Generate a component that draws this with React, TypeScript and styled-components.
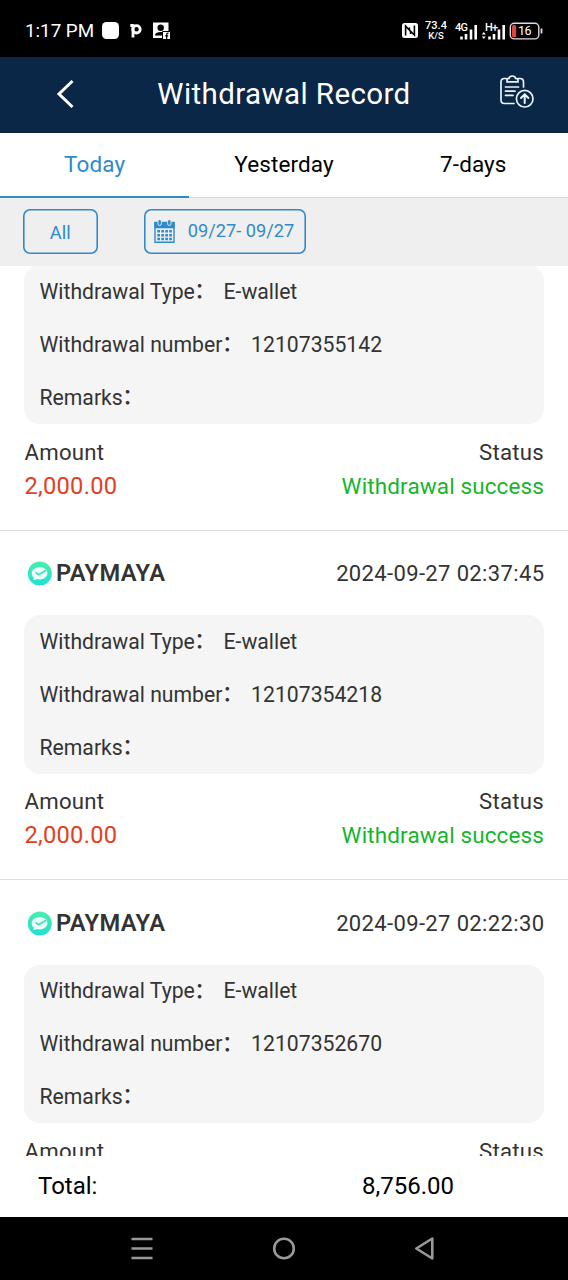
import React from "react";
import styled, { createGlobalStyle } from "styled-components";

const GlobalStyle = createGlobalStyle`
  * { box-sizing: border-box; }
  body {
    margin: 0;
    background: #fff;
    font-family: Roboto, "Noto Sans CJK SC", sans-serif;
    color: #333;
  }
`;

const Screen = styled.div`
  width: 568px;
  height: 1280px;
  display: flex;
  flex-direction: column;
  overflow: hidden;
  background: #fff;
  white-space: nowrap;
`;

const StatusBar = styled.div`
  height: 57px;
  flex: none;
  background: #000;
  color: #fff;
  display: flex;
  align-items: center;
  padding: 4px 25px 0 25px;
`;

const Clock = styled.span`
  width: 77px;
  font-size: 18.8px;
  line-height: 22px;
`;

const StatusIcons = styled.svg`
  display: block;
  flex: none;
`;

const Spacer = styled.div`
  flex: 1;
`;

const NetSpeed = styled.div`
  width: 24px;
  margin: 0 7px 0 6px;
  display: flex;
  flex-direction: column;
  align-items: center;
  font-size: 11px;
  line-height: 10px;
  font-weight: 500;
`;

const SpeedUnit = styled.span`
  font-size: 9.5px;
`;

const Header = styled.header`
  height: 75.5px;
  flex: none;
  background: #0b2747;
  color: #fff;
  display: grid;
  grid-template-columns: 100px 1fr 100px;
  align-items: center;
  justify-items: center;
`;

const BackIcon = styled.svg`
  display: block;
  margin: 0 0 2px 32px;
`;

const RecordIcon = styled.svg`
  display: block;
  margin: 0 2px 6px 0;
`;

const Title = styled.h1`
  margin: 0 0 1.5px;
  font-size: 29.5px;
  font-weight: 400;
  letter-spacing: 0.4px;
  line-height: 36px;
`;

const Tabs = styled.nav`
  height: 65.5px;
  flex: none;
  display: grid;
  grid-template-columns: repeat(3, 1fr);
`;

const Tab = styled.div<{ $active?: boolean }>`
  display: flex;
  align-items: center;
  justify-content: center;
  padding-bottom: ${(p) => (p.$active ? 0 : 1.5)}px;
  font-size: 22.5px;
  letter-spacing: 0.1px;
  color: ${(p) => (p.$active ? "#2e8bcb" : "#000")};
  border-bottom: ${(p) => (p.$active ? "2.5px solid #2e8bcb" : "1px solid #d8d8d8")};
`;

const Filters = styled.div`
  height: 68px;
  flex: none;
  background: #efefef;
  display: flex;
  align-items: flex-start;
  gap: 46px;
  padding: 11px 22.5px 0;
`;

const FilterButton = styled.div<{ $width: number; $top?: number }>`
  width: ${(p) => p.$width}px;
  height: 45px;
  padding-top: ${(p) => p.$top ?? 0}px;
  box-shadow: inset 0 0 0 1.6px #2e8bcb;
  border-radius: 7px;
  display: flex;
  align-items: center;
  justify-content: center;
  gap: 13px;
  font-size: 18.3px;
  color: #2e8bcb;
`;

const DateRange = styled.span`
  margin-right: 2px;
  padding-bottom: 2px;
  font-size: 18.2px;
`;

const List = styled.main`
  height: 890px;
  flex: none;
  overflow: hidden;
`;

const Record = styled.section<{ $scrolled?: boolean }>`
  height: 349.7px;
  margin-top: ${(p) => (p.$scrolled ? -85.2 : 0)}px;
  padding: 0 24px;
  border-bottom: 1.5px solid #dedede;
`;

const RecordHead = styled.div`
  height: 84.5px;
  padding-top: 1.4px;
  display: flex;
  align-items: center;
  justify-content: space-between;
`;

const Wallet = styled.div`
  display: flex;
  align-items: center;
  gap: 4px;
  padding-left: 3px;
  font-size: 23.7px;
  font-weight: 600;
  letter-spacing: 0.4px;
`;

const Time = styled.time`
  font-size: 22px;
  letter-spacing: 0.36px;
  margin-right: -0.36px;
`;

const Panel = styled.div`
  height: 158.5px;
  padding: 0.3px 15.5px 0;
  border-radius: 16px;
  background: #f5f5f5;
`;

const Field = styled.div`
  height: 52.9px;
  display: flex;
  align-items: center;
  font-size: 21.2px;
  line-height: 26px;
`;

const Colon = styled.span`
  width: 21.2px;
  margin-left: -0.5px;
  padding-bottom: 1.5px;
  font-weight: 500;
`;

const Value = styled.span`
  margin-left: 8px;
`;

const Summary = styled.div`
  display: flex;
  justify-content: space-between;
  padding-top: 10.8px;
`;

const SummaryCell = styled.div<{ $end?: boolean }>`
  display: flex;
  flex-direction: column;
  align-items: ${(p) => (p.$end ? "flex-end" : "flex-start")};
  padding-left: ${(p) => (p.$end ? 0 : 0.5)}px;
  line-height: 34px;
  font-size: 22.2px;
  letter-spacing: 0.25px;
`;

const Amount = styled.span`
  color: #e2401f;
  font-size: 23.7px;
`;

const State = styled.span`
  color: #16b52c;
  font-size: 22.5px;
  letter-spacing: 0.12px;
`;

const TotalBar = styled.footer`
  height: 61px;
  padding-bottom: 2px;
  flex: none;
  display: grid;
  grid-template-columns: 362px 1fr;
  align-items: center;
  color: #000;
  font-size: 24px;
  background: #fff;
`;

const TotalLabel = styled.span`
  padding-left: 38px;
`;

const NavBar = styled.div`
  height: 63px;
  flex: none;
  background: #000;
  display: flex;
  justify-content: center;
  align-items: center;
  gap: 117px;
`;

const MayaLogo = () => (
  <svg width="25" height="25" viewBox="0 0 25 25">
    <defs>
      <linearGradient id="maya" x1="0" y1="0" x2="0" y2="1">
        <stop offset="0" stopColor="#46efab" />
        <stop offset="1" stopColor="#22dfd5" />
      </linearGradient>
    </defs>
    <circle cx="12.800" cy="12.500" r="12" fill="url(#maya)" />
    <path d="M12.8 6.3c4.8 0 7.6 2.4 7.6 5.8s-3 6.3-7.7 6.3c-1 0-1.8-.1-2.6-.3-1.2.7-2.7 1-4.2.8.7-.7 1-1.4 1.1-2.2-1.5-1.1-2.3-2.6-2.3-4.3 0-3.700 3.400-6.100 8.100-6.100Z" fill="#effffb" />
    <path d="M8.400 11.300l3.200 2.500 7.500-4.500" fill="none" stroke="#39e3bd" strokeWidth="1.700" />
  </svg>
);

const CalendarIcon = () => (
  <svg width="21" height="23" viewBox="0 0 21 23">
    <path d="M1 2.500h19v19.700H1z" fill="none" stroke="#2e8bcb" strokeWidth="1.400" />
    <path d="M.300 2h20.400v6.300H.300z" fill="#2e8bcb" />
    <rect x="4" y="-.5" width="3.400" height="6" rx="1.700" fill="#2e8bcb" stroke="#efefef" strokeWidth=".9" />
    <rect x="13.600" y="-.5" width="3.400" height="6" rx="1.700" fill="#2e8bcb" stroke="#efefef" strokeWidth=".9" />
    <path d="M3.300 11.300h14.600M3.300 15.200h14.600M3.300 19h14.600" stroke="#2e8bcb" strokeWidth="2.400" strokeDasharray="2.700 1.270" />
  </svg>
);

type Item = { time: string; number: string };

const items: Item[] = [
  { time: "", number: "12107355142" },
  { time: "2024-09-27 02:37:45", number: "12107354218" },
  { time: "2024-09-27 02:22:30", number: "12107352670" },
];

const RecordItem = ({ item, scrolled }: { item: Item; scrolled: boolean }) => (
  <Record $scrolled={scrolled}>
    <RecordHead>
      {!scrolled && (
        <>
          <Wallet>
            <MayaLogo />
            PAYMAYA
          </Wallet>
          <Time>{item.time}</Time>
        </>
      )}
    </RecordHead>
    <Panel>
      <Field>
        Withdrawal Type<Colon>：</Colon>
        <Value>E-wallet</Value>
      </Field>
      <Field>
        Withdrawal number<Colon>：</Colon>
        <Value>{item.number}</Value>
      </Field>
      <Field>
        Remarks<Colon>：</Colon>
      </Field>
    </Panel>
    <Summary>
      <SummaryCell>
        <span>Amount</span>
        <Amount>2,000.00</Amount>
      </SummaryCell>
      <SummaryCell $end>
        <span>Status</span>
        <State>Withdrawal success</State>
      </SummaryCell>
    </Summary>
  </Record>
);

export default function App() {
  return (
    <Screen>
      <GlobalStyle />
      <StatusBar>
        <Clock>1:17 PM</Clock>
        <StatusIcons width="70" height="18" viewBox="0 0 70 18">
          <rect x="0" y="0" width="17" height="17" rx="4.500" fill="#fff" />
          <path d="M28.300 3.500h3M31 2.200v13.300" stroke="#fff" strokeWidth="2.800" fill="none" />
          <circle cx="34.500" cy="7.300" r="3.700" stroke="#fff" strokeWidth="2.800" fill="none" />
          <path d="M51 .500h15.500v15.500H51z" fill="#fff" />
          <circle cx="58.700" cy="5.700" r="3.200" fill="#000" />
          <path d="M52.800 13.500c.5-2.800 3-3.600 5.900-3.600s4 .4 5 1.600v2z" fill="#000" />
          <path d="M60.500 9.500h8v8h-8z" fill="#fff" stroke="#000" />
          <path d="M66.500 11.200h-.6q-1.200 0-1.200 1.200v5M63.200 13.800h3" stroke="#000" strokeWidth="1.200" fill="none" />
        </StatusIcons>
        <Spacer />
        <StatusIcons width="16" height="16" viewBox="0 0 16 16">
          <rect width="16" height="15" rx="2.500" fill="#fff" />
          <path d="M3.600 12.500V3l5 5.500v2.500M12.400 2.500V12L7.400 7V4.500" fill="none" stroke="#000" strokeWidth="1.600" />
        </StatusIcons>
        <NetSpeed>
          73.4
          <SpeedUnit>K/S</SpeedUnit>
        </NetSpeed>
        <StatusIcons width="88" height="20" viewBox="0 0 88 20">
          <g fill="#fff" fontFamily="Roboto" fontSize="11" fontWeight="500">
            <text x="0" y="9.500" textLength="13">4G</text>
            <text x="30" y="9.500" textLength="13">H+</text>
          </g>
          <path d="M6.500 18.500v-3M11 18.500v-5.500M16 18.500V8.500M20.700 18.500V4M34.500 18.500v-3M39 18.500v-5.500M44 18.500V8.500M48.700 18.500V4" stroke="#fff" strokeWidth="2.600" />
          <path d="M26.800 13.500l2 -2.500 2 2.500zM26.800 15.500l2 2.500 2-2.500z" fill="#fff" />
          <rect x="55.300" y="2.300" width="28.500" height="15.600" rx="4" fill="none" stroke="#ddd" strokeWidth="1.400" />
          <path d="M86.500 7.500v5" stroke="#ddd" strokeWidth="1.800" />
          <rect x="57" y="4" width="4.200" height="12.200" rx="1.500" fill="#e0443f" />
          <text x="63" y="14.400" fill="#fff" fontFamily="Roboto" fontSize="12.500" textLength="13.500">16</text>
        </StatusIcons>
      </StatusBar>
      <Header>
        <BackIcon width="20" height="30" viewBox="0 0 20 30">
          <path d="M16.500 2L3 15l13.500 13" fill="none" stroke="#fff" strokeWidth="3" />
        </BackIcon>
        <Title>Withdrawal Record</Title>
        <RecordIcon width="34" height="34" viewBox="0 0 34 34" fill="none" stroke="#eaf4fc" strokeWidth="1.700" strokeLinecap="round">
          <path d="M6.500 3.500H4.500Q1 3.500 1 7V25Q1 28.500 4.500 28.500H14M18.500 3.500H20Q23.500 3.500 23.500 7V12" />
          <path d="M7 6.800V4.800Q7 3.300 9 3.300Q9.500 1 12.300 1T15.600 3.300Q18 3.300 18 4.800V6.800Z" />
          <path d="M5.500 12H18.500M5.500 16.200H15M5.500 20.400H13" />
          <circle cx="24.700" cy="23.700" r="8.300" />
          <path d="M24.700 28V19.500M21 23l3.700-3.700 3.700 3.700" strokeWidth="2" />
        </RecordIcon>
      </Header>
      <Tabs>
        <Tab $active>Today</Tab>
        <Tab>Yesterday</Tab>
        <Tab>7-days</Tab>
      </Tabs>
      <Filters>
        <FilterButton $width={75.500} $top={2}>All</FilterButton>
        <FilterButton $width={162}>
          <CalendarIcon />
          <DateRange>09/27- 09/27</DateRange>
        </FilterButton>
      </Filters>
      <List>
        {items.map((item, i) => (
          <RecordItem key={item.number} item={item} scrolled={i === 0} />
        ))}
      </List>
      <TotalBar>
        <TotalLabel>Total:</TotalLabel>
        <span>8,756.00</span>
      </TotalBar>
      <NavBar>
        <svg width="24" height="24" viewBox="0 0 24 24">
          <path d="M.500 2h21M.500 11.500h21M.500 21h21" stroke="#999" strokeWidth="2.700" />
        </svg>
        <svg width="24" height="24" viewBox="0 0 24 24">
          <circle cx="12" cy="11.500" r="9.800" fill="none" stroke="#999" strokeWidth="2.600" />
        </svg>
        <svg width="24" height="24" viewBox="0 0 24 24">
          <path d="M3.300 11.500L19.300 1.500V21.500Z" fill="none" stroke="#999" strokeWidth="2.600" strokeLinejoin="round" />
        </svg>
      </NavBar>
    </Screen>
  );
}
